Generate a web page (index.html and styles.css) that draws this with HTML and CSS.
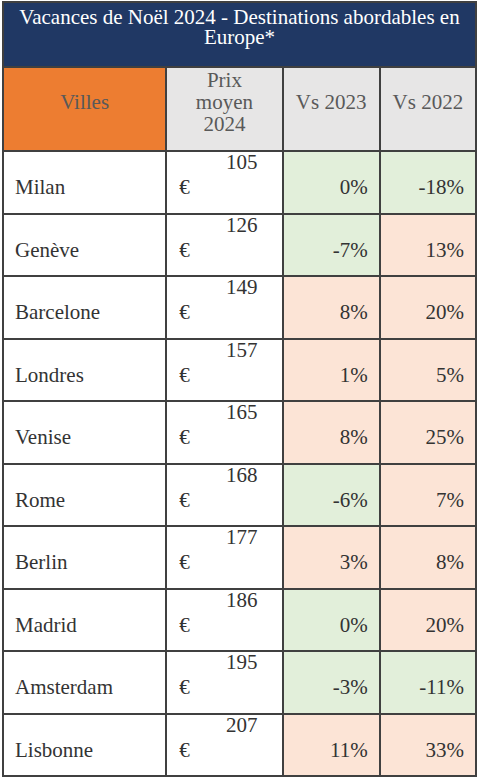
FILE: index.html
```html
<!DOCTYPE html>
<html lang="fr">
<head>
<meta charset="utf-8">
<link rel="stylesheet" href="styles.css">
</head>
<body>
<table class="tbl">
  <colgroup>
    <col class="c1"><col class="c2"><col class="c3"><col class="c4">
  </colgroup>
  <tr class="title-row"><th colspan="4" class="title">Vacances de Noël 2024 - Destinations abordables en Europe*</th></tr>
  <tr class="head-row">
    <th class="h orange">Villes</th>
    <th class="h grey">Prix<br>moyen<br>2024</th>
    <th class="h grey">Vs 2023</th>
    <th class="h grey">Vs 2022</th>
  </tr>
  <tr class="row"><td class="city">Milan</td><td class="price"><div class="num">105</div><div class="cur">€</div></td><td class="pct g">0%</td><td class="pct g">-18%</td></tr>
  <tr class="row"><td class="city">Genève</td><td class="price"><div class="num">126</div><div class="cur">€</div></td><td class="pct g">-7%</td><td class="pct r">13%</td></tr>
  <tr class="row"><td class="city">Barcelone</td><td class="price"><div class="num">149</div><div class="cur">€</div></td><td class="pct r">8%</td><td class="pct r">20%</td></tr>
  <tr class="row"><td class="city">Londres</td><td class="price"><div class="num">157</div><div class="cur">€</div></td><td class="pct r">1%</td><td class="pct r">5%</td></tr>
  <tr class="row"><td class="city">Venise</td><td class="price"><div class="num">165</div><div class="cur">€</div></td><td class="pct r">8%</td><td class="pct r">25%</td></tr>
  <tr class="row"><td class="city">Rome</td><td class="price"><div class="num">168</div><div class="cur">€</div></td><td class="pct g">-6%</td><td class="pct r">7%</td></tr>
  <tr class="row"><td class="city">Berlin</td><td class="price"><div class="num">177</div><div class="cur">€</div></td><td class="pct r">3%</td><td class="pct r">8%</td></tr>
  <tr class="row"><td class="city">Madrid</td><td class="price"><div class="num">186</div><div class="cur">€</div></td><td class="pct g">0%</td><td class="pct r">20%</td></tr>
  <tr class="row"><td class="city">Amsterdam</td><td class="price"><div class="num">195</div><div class="cur">€</div></td><td class="pct g">-3%</td><td class="pct g">-11%</td></tr>
  <tr class="row"><td class="city">Lisbonne</td><td class="price"><div class="num">207</div><div class="cur">€</div></td><td class="pct r">11%</td><td class="pct r">33%</td></tr>
</table>
</body>
</html>
```
FILE: styles.css
```css
html, body {
  margin: 0;
  padding: 0;
  background: #ffffff;
}
body {
  padding: 1px 0 0 2px;
  font-family: "Liberation Serif", "Times New Roman", serif;
  font-size: 21px;
  line-height: 20px;
}
.tbl {
  border-collapse: collapse;
  table-layout: fixed;
  width: 475px;
  font-family: "Liberation Serif", "Times New Roman", serif;
  font-size: 21px;
}
.c1 { width: 163px; }
.c2 { width: 116px; }
.c3 { width: 97px; }
.c4 { width: 96px; }
.tbl th, .tbl td {
  border: 2px solid #404040;
  padding: 0;
  font-family: "Liberation Serif", "Times New Roman", serif;
  font-size: 21px;
}
.title-row { height: 65px; }
.tbl .title {
  background: #203864;
  color: #ffffff;
  font-weight: normal;
  text-align: center;
  vertical-align: top;
  padding: 4px 6px 0;
  line-height: 20px;
}
.head-row { height: 84px; }
.tbl .h {
  font-weight: normal;
  color: #595959;
  text-align: center;
  vertical-align: middle;
  line-height: 22px;
  padding-bottom: 15px;
}
.tbl .orange { background: #ed7d31; }
.tbl .grey { background: #e7e6e6; }
.row { height: 62.5px; }
.tbl .row td {
  color: #333333;
  vertical-align: top;
  line-height: 20px;
}
.tbl .row .city {
  padding: 25px 0 0 11px;
  text-align: left;
}
.tbl .row .price {
  padding: 0 24px 0 12px;
}
.num { text-align: right; }
.cur { text-align: left; margin-top: 5px; }
.tbl .row .pct {
  text-align: right;
  padding: 25px 11px 0 0;
}
.tbl .row .pct:last-child { padding-right: 11px; }
.tbl .g { background: #e2efda; }
.tbl .r { background: #fce4d6; }
```
